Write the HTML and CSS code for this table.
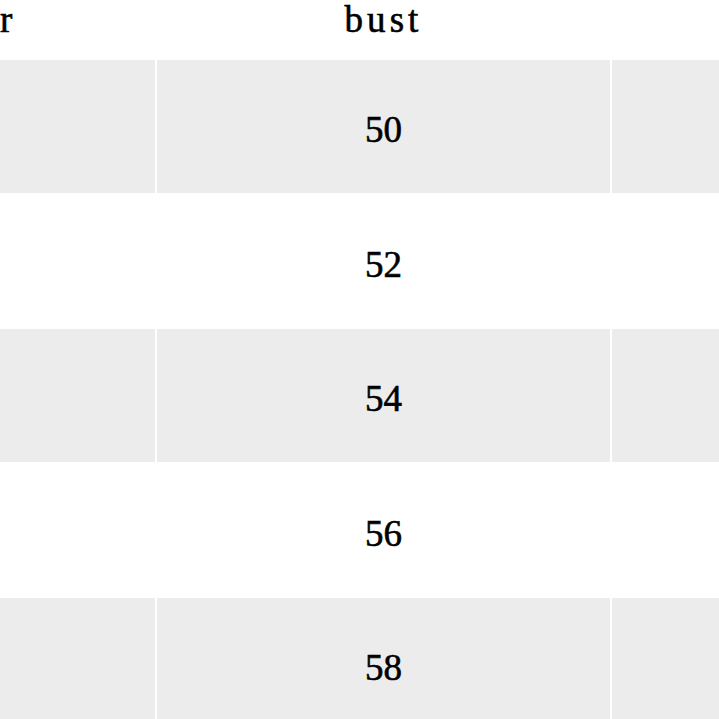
FILE: index.html
```html
<!DOCTYPE html>
<html>
<head>
<meta charset="utf-8">
<link rel="stylesheet" href="styles.css">
</head>
<body>
<div class="frame">
<table class="size-table">
  <colgroup><col class="col"><col class="col"><col class="col"></colgroup>
  <thead>
    <tr class="head-row"><th class="first">shoulder</th><th>bust</th><th></th></tr>
  </thead>
  <tbody>
    <tr class="row shaded"><td></td><td>50</td><td></td></tr>
    <tr class="row"><td></td><td>52</td><td></td></tr>
    <tr class="row shaded"><td></td><td>54</td><td></td></tr>
    <tr class="row"><td></td><td>56</td><td></td></tr>
    <tr class="row shaded"><td></td><td>58</td><td></td></tr>
  </tbody>
</table>
</div>
</body>
</html>
```

FILE: styles.css
```css
html, body {
  margin: 0;
  padding: 0;
  background: #ffffff;
  overflow: hidden;
}
.frame {
  width: 719px;
  height: 719px;
  overflow: hidden;
}
.size-table {
  table-layout: fixed;
  border-collapse: separate;
  border-spacing: 2px;
  margin-left: -300px;
  margin-top: -2px;
  width: 1365px;
  font-family: "Liberation Serif", "Times New Roman", serif;
  font-size: 37px;
  color: #000000;
  -webkit-text-stroke: 0.6px #000000;
}
.col { width: 453px; }
.head-row th {
  height: 58px;
  padding: 0;
  line-height: 40px;
  vertical-align: top;
  font-weight: normal;
  letter-spacing: 0.11em;
  text-align: center;
}
.head-row th.first { padding-left: 16px; }
.row td {
  height: 132.5px;
  padding: 8px 0 0 0;
  box-sizing: border-box;
  text-align: center;
  vertical-align: middle;
  line-height: 40px;
}
.row.shaded td { background: #ebeceb; }
```
